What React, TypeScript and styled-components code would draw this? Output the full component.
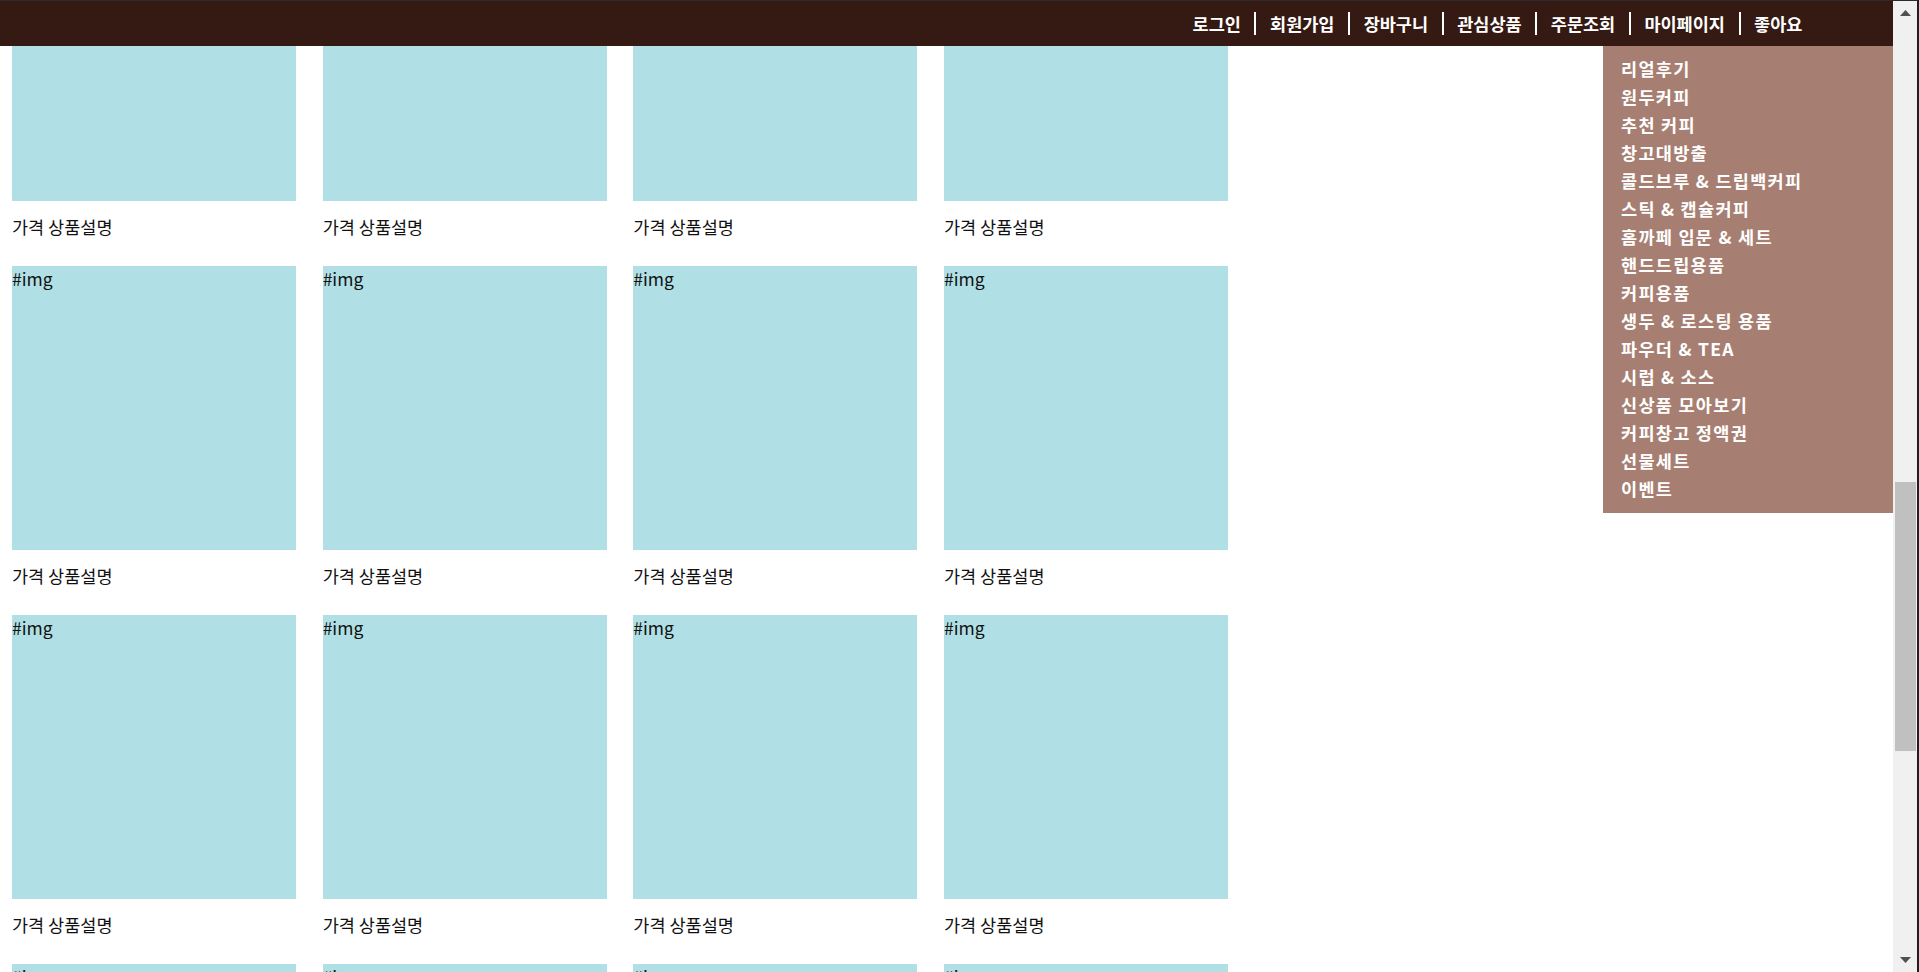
import React, { useLayoutEffect, useRef, useState } from "react";
import styled, { createGlobalStyle } from "styled-components";

const GlobalStyle = createGlobalStyle`
  html, body {
    margin: 0;
    padding: 0;
    height: 100%;
    overflow: hidden;
    background: #ffffff;
  }
  body {
    font-family: "Noto Sans CJK KR", "Noto Sans", sans-serif;
    color: #111111;
  }
  *, *::before, *::after { box-sizing: border-box; }
`;

const Frame = styled.div`
  height: 100vh;
  display: flex;
  flex-direction: row;
  border-top: 1px solid #2b2b2b;
  border-right: 2px solid #1e1e1e;
`;

const Scroller = styled.div`
  flex: 1;
  min-width: 0;
  height: 100%;
  overflow: hidden;
  background: #ffffff;
`;

const Rail = styled.div`
  width: 24px;
  flex: none;
  height: 100%;
  background: #f0f0f0;
  display: flex;
  flex-direction: column;
`;

const ArrowButton = styled.div`
  height: 24px;
  flex: none;
  display: flex;
  align-items: center;
  justify-content: center;
`;

const Track = styled.div`
  flex: 1;
  min-height: 0;
  display: flex;
  flex-direction: column;
`;

const ScrollThumb = styled.div`
  flex: none;
  margin: 0 1px 0 2px;
  background: #c0c0c0;
`;

const Header = styled.header`
  position: sticky;
  top: 0;
  z-index: 10;
  height: 45px;
  background: #351a13;
  display: flex;
  justify-content: flex-end;
  align-items: center;
  padding-right: 77px;
`;

const TopMenu = styled.ul`
  list-style: none;
  margin: 0;
  padding: 0;
  display: flex;
  align-items: center;
`;

const TopItem = styled.li<{ $first?: boolean }>`
  padding: 0 13.6px;
  height: 23px;
  line-height: 23px;
  border-left: ${(p) => (p.$first ? "none" : "2px solid #ffffff")};
  color: #ffffff;
  font-size: 17.5px;
  font-weight: 700;
  white-space: nowrap;
`;

const Dropdown = styled.ul`
  position: absolute;
  top: 100%;
  right: 0;
  width: 290px;
  margin: 0;
  padding: 9px 18px 10px;
  list-style: none;
  background: #a77f72;
`;

const DropItem = styled.li`
  color: #ffffff;
  font-size: 17.5px;
  font-weight: 700;
  line-height: 28px;
  letter-spacing: 1.3px;
  white-space: nowrap;
`;

const Grid = styled.ul`
  list-style: none;
  margin: 0;
  padding: 124px 0 49px 12px;
  display: grid;
  grid-template-columns: repeat(4, 284px);
  column-gap: 26.67px;
  row-gap: 27px;
`;

const Card = styled.li`
  display: flex;
  flex-direction: column;
`;

const Thumb = styled.div`
  width: 284px;
  height: 284px;
  padding-top: 1px;
  background: #b0dfe5;
  color: #111111;
  font-size: 17.5px;
  line-height: 24px;
`;

const Caption = styled.p`
  margin: 14px 0 0;
  font-size: 17.5px;
  line-height: 24px;
  color: #111111;
`;

const topMenu = ["로그인", "회원가입", "장바구니", "관심상품", "주문조회", "마이페이지", "좋아요"];

const categories = [
  "리얼후기",
  "원두커피",
  "추천 커피",
  "창고대방출",
  "콜드브루 & 드립백커피",
  "스틱 & 캡슐커피",
  "홈까페 입문 & 세트",
  "핸드드립용품",
  "커피용품",
  "생두 & 로스팅 용품",
  "파우더 & TEA",
  "시럽 & 소스",
  "신상품 모아보기",
  "커피창고 정액권",
  "선물세트",
  "이벤트",
];

const products = Array.from({ length: 36 }, (_, i) => i);

const SCROLL_TOP = 1649;

function Triangle({ up }: { up?: boolean }) {
  return (
    <svg width="11" height="6" viewBox="0 0 11 6">
      {up ? <path d="M5.5 0 L11 6 L0 6 Z" fill="#505050" /> : <path d="M0 0 L11 0 L5.5 6 Z" fill="#505050" />}
    </svg>
  );
}

export default function App() {
  const ref = useRef<HTMLDivElement>(null);
  const trackRef = useRef<HTMLDivElement>(null);
  const [thumb, setThumb] = useState({ top: 457, height: 269 });

  useLayoutEffect(() => {
    const el = ref.current;
    const tr = trackRef.current;
    if (!el || !tr) return;
    el.scrollTop = SCROLL_TOP;
    const track = tr.clientHeight;
    const total = el.scrollHeight;
    const view = el.clientHeight;
    const h = Math.max(20, Math.round((track * view) / total));
    const max = total - view;
    const top = max > 0 ? Math.round((el.scrollTop / max) * (track - h)) : 0;
    setThumb({ top, height: h });
  }, []);

  return (
    <>
      <GlobalStyle />
      <Frame>
        <Scroller ref={ref}>
          <Header>
            <TopMenu>
              {topMenu.map((m, i) => (
                <TopItem key={m} $first={i === 0}>
                  {m}
                </TopItem>
              ))}
            </TopMenu>
            <Dropdown>
              {categories.map((c) => (
                <DropItem key={c}>{c}</DropItem>
              ))}
            </Dropdown>
          </Header>
          <Grid>
            {products.map((p) => (
              <Card key={p}>
                <Thumb>#img</Thumb>
                <Caption>가격 상품설명</Caption>
              </Card>
            ))}
          </Grid>
        </Scroller>
        <Rail>
          <ArrowButton>
            <Triangle up />
          </ArrowButton>
          <Track ref={trackRef}>
            <ScrollThumb style={{ marginTop: thumb.top, height: thumb.height }} />
          </Track>
          <ArrowButton>
            <Triangle />
          </ArrowButton>
        </Rail>
      </Frame>
    </>
  );
}
